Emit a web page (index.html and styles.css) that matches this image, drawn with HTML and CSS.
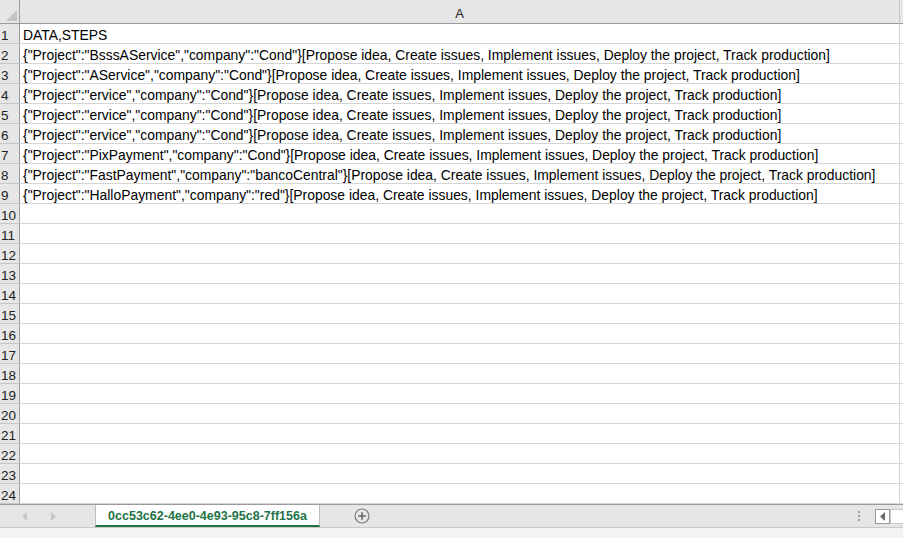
FILE: index.html
```html
<!DOCTYPE html>
<html>
<head>
<meta charset="utf-8">
<link rel="stylesheet" href="styles.css">
</head>
<body>
<div class="app">
  <div class="grid">
    <div class="corner"><svg class="tri" width="11" height="11" viewBox="0 0 11 11"><polygon points="11,0 11,11 0,11" fill="#c2c2c2"/></svg></div>
    <div class="colhead">A</div>
    <div class="rest head"></div>

    <div class="rh">1</div><div class="cell">DATA,STEPS</div><div class="rest"></div>
    <div class="rh">2</div><div class="cell">{"Project":"BsssAService","company":"Cond"}[Propose idea, Create issues, Implement issues, Deploy the project, Track production]</div><div class="rest"></div>
    <div class="rh">3</div><div class="cell">{"Project":"AService","company":"Cond"}[Propose idea, Create issues, Implement issues, Deploy the project, Track production]</div><div class="rest"></div>
    <div class="rh">4</div><div class="cell">{"Project":"ervice","company":"Cond"}[Propose idea, Create issues, Implement issues, Deploy the project, Track production]</div><div class="rest"></div>
    <div class="rh">5</div><div class="cell">{"Project":"ervice","company":"Cond"}[Propose idea, Create issues, Implement issues, Deploy the project, Track production]</div><div class="rest"></div>
    <div class="rh">6</div><div class="cell">{"Project":"ervice","company":"Cond"}[Propose idea, Create issues, Implement issues, Deploy the project, Track production]</div><div class="rest"></div>
    <div class="rh">7</div><div class="cell">{"Project":"PixPayment","company":"Cond"}[Propose idea, Create issues, Implement issues, Deploy the project, Track production]</div><div class="rest"></div>
    <div class="rh">8</div><div class="cell">{"Project":"FastPayment","company":"bancoCentral"}[Propose idea, Create issues, Implement issues, Deploy the project, Track production]</div><div class="rest"></div>
    <div class="rh">9</div><div class="cell">{"Project":"HalloPayment","company":"red"}[Propose idea, Create issues, Implement issues, Deploy the project, Track production]</div><div class="rest"></div>
    <div class="rh">10</div><div class="cell"></div><div class="rest"></div>
    <div class="rh">11</div><div class="cell"></div><div class="rest"></div>
    <div class="rh">12</div><div class="cell"></div><div class="rest"></div>
    <div class="rh">13</div><div class="cell"></div><div class="rest"></div>
    <div class="rh">14</div><div class="cell"></div><div class="rest"></div>
    <div class="rh">15</div><div class="cell"></div><div class="rest"></div>
    <div class="rh">16</div><div class="cell"></div><div class="rest"></div>
    <div class="rh">17</div><div class="cell"></div><div class="rest"></div>
    <div class="rh">18</div><div class="cell"></div><div class="rest"></div>
    <div class="rh">19</div><div class="cell"></div><div class="rest"></div>
    <div class="rh">20</div><div class="cell"></div><div class="rest"></div>
    <div class="rh">21</div><div class="cell"></div><div class="rest"></div>
    <div class="rh">22</div><div class="cell"></div><div class="rest"></div>
    <div class="rh">23</div><div class="cell"></div><div class="rest"></div>
    <div class="rh">24</div><div class="cell"></div><div class="rest"></div>
  </div>

  <div class="tabbar">
    <div class="nav">
      <svg width="6" height="9" viewBox="0 0 6 9"><polygon points="5,0 5,9 0,4.5" fill="#c6c6c6"/></svg>
      <svg width="6" height="9" viewBox="0 0 6 9"><polygon points="1,0 1,9 6,4.5" fill="#c6c6c6"/></svg>
    </div>
    <div class="tab">0cc53c62-4ee0-4e93-95c8-7ff156a</div>
    <div class="add">
      <svg width="16" height="16" viewBox="0 0 16 16"><circle cx="8" cy="8" r="7" fill="none" stroke="#7a7a7a" stroke-width="1.2"/><path d="M8 4.2v7.6M4.2 8h7.6" stroke="#6a6a6a" stroke-width="1.6"/></svg>
    </div>
    <div class="spacer"></div>
    <div class="dots"><span></span><span></span><span></span></div>
    <div class="scroll">
      <div class="sbtn"><svg width="5" height="9" viewBox="0 0 5 9"><polygon points="5,0 5,9 0,4.5" fill="#6a6a6a"/></svg></div>
      <div class="strack"></div>
    </div>
  </div>
  <div class="status"></div>
</div>
</body>
</html>
```

FILE: styles.css
```css
html, body {
  margin: 0;
  padding: 0;
  background: #ffffff;
}
.app {
  width: 903px;
  height: 538px;
  overflow: hidden;
  font-family: "Liberation Sans", Arial, sans-serif;
}
.grid {
  display: grid;
  grid-template-columns: 20px 880px 3px;
  grid-template-rows: 24px repeat(24, 20px);
}
.corner {
  background: #e6e6e6;
  border-right: 1px solid #9b9b9b;
  border-bottom: 1px solid #9b9b9b;
  box-sizing: border-box;
  display: flex;
  align-items: flex-end;
  justify-content: flex-end;
  padding: 0 2px 2px 0;
}
.tri { display: block; }
.colhead {
  background: #e6e6e6;
  border-bottom: 1px solid #9b9b9b;
  border-right: 1px solid #c6c6c6;
  box-sizing: border-box;
  display: flex;
  align-items: center;
  justify-content: center;
  font-size: 13px;
  color: #222;
  padding-top: 4px;
}
.rest.head {
  background: #e6e6e6;
  border-bottom: 1px solid #9b9b9b;
}
.rest {
  box-sizing: border-box;
  border-bottom: 1px solid #d4d4d4;
}
.rh {
  background: #e6e6e6;
  border-right: 1px solid #9b9b9b;
  border-bottom: 1px solid #c6c6c6;
  box-sizing: border-box;
  font-size: 13.5px;
  color: #222;
  line-height: 19px;
  padding-left: 1px;
  padding-top: 2px;
}
.cell {
  border-right: 1px solid #d4d4d4;
  border-bottom: 1px solid #d4d4d4;
  box-sizing: border-box;
  font-size: 13.9px;
  color: #000;
  line-height: 19px;
  padding-left: 3px;
  padding-top: 2px;
  white-space: nowrap;
  overflow: visible;
}
.tabbar {
  height: 24px;
  box-sizing: border-box;
  background: #e6e6e6;
  border-top: 1px solid #9b9b9b;
  border-bottom: 1px solid #c8c8c8;
  display: flex;
  align-items: stretch;
}
.nav {
  width: 95px;
  display: flex;
  align-items: center;
  gap: 22px;
  padding-left: 22px;
  box-sizing: border-box;
}
.nav svg { display: block; }
.tab {
  width: 225px;
  box-sizing: border-box;
  background: #ffffff;
  border-left: 1px solid #bdbdbd;
  border-right: 1px solid #bdbdbd;
  border-bottom: 2px solid #217346;
  color: #217346;
  font-weight: bold;
  font-size: 12.5px;
  display: flex;
  align-items: center;
  justify-content: center;
  padding-top: 1px;
}
.add {
  width: 84px;
  display: flex;
  align-items: center;
  justify-content: center;
}
.add svg { display: block; }
.spacer { flex: 1; }
.dots {
  width: 4px;
  display: flex;
  flex-direction: column;
  justify-content: center;
  gap: 2px;
  margin-right: 13px;
}
.dots span {
  display: block;
  width: 2px;
  height: 2px;
  background: #9b9b9b;
}
.scroll {
  width: 28px;
  display: flex;
  align-items: center;
}
.sbtn {
  width: 15px;
  height: 15px;
  box-sizing: border-box;
  border: 1px solid #9b9b9b;
  background: #fff;
  display: flex;
  align-items: center;
  justify-content: center;
}
.sbtn svg { display: block; }
.strack {
  flex: 1;
  height: 15px;
  box-sizing: border-box;
  border-top: 1px solid #c8c8c8;
  border-bottom: 1px solid #c8c8c8;
  border-left: 1px solid #c8c8c8;
  background: #fff;
}
.status {
  height: 10px;
  background: #f3f3f3;
}
```
